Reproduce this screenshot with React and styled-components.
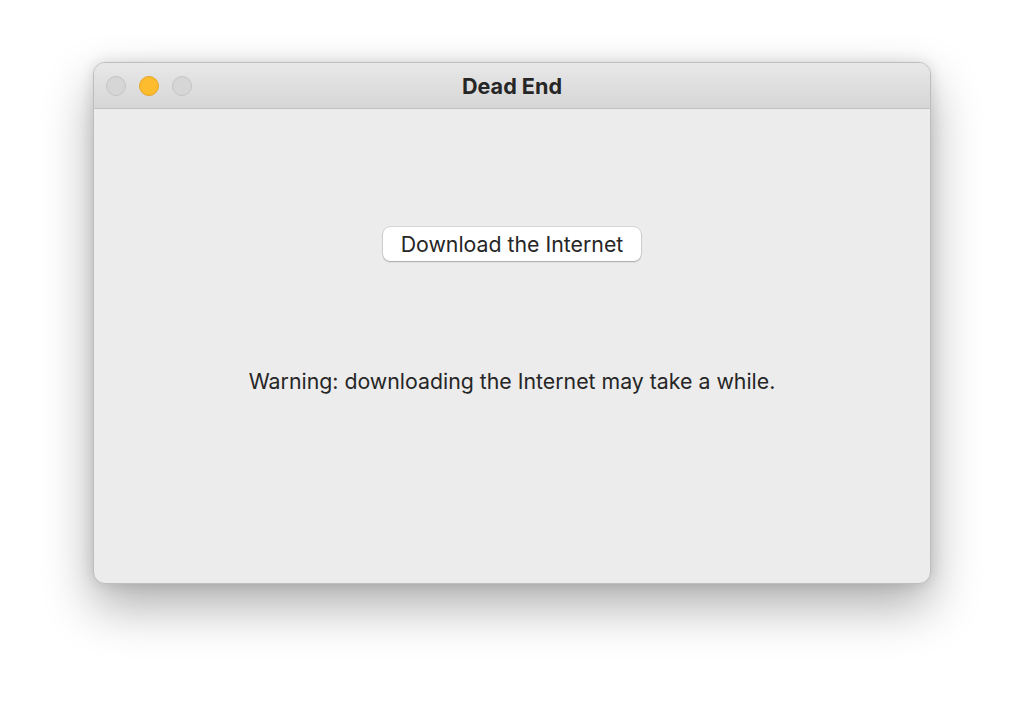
import React from "react";
import styled, { createGlobalStyle } from "styled-components";

const Global = createGlobalStyle`
  html, body { margin: 0; padding: 0; background: #ffffff; }
  body { font-family: Inter, "Noto Sans", sans-serif; -webkit-font-smoothing: antialiased; }
`;

const Page = styled.div`
  width: 1024px;
  height: 707px;
  box-sizing: border-box;
  padding: 62px 0 0 93px;
  background: #ffffff;
  overflow: hidden;
`;

const Window = styled.div`
  width: 838px;
  height: 522px;
  box-sizing: border-box;
  border-radius: 12px;
  background: #ececec;
  border: 1px solid #bdbdbd;
  box-shadow: 0 22px 50px rgba(0, 0, 0, 0.32), 0 0 14px rgba(0, 0, 0, 0.12);
  overflow: hidden;
  display: flex;
  flex-direction: column;
`;

const TitleBar = styled.div`
  height: 46px;
  flex: none;
  box-sizing: border-box;
  background: linear-gradient(#e8e8e8, #d6d6d6);
  border-bottom: 1px solid #c2c2c2;
  display: grid;
  grid-template-columns: 1fr auto 1fr;
  align-items: center;
  padding: 0 12px;
`;

const Lights = styled.div`
  display: flex;
  gap: 13px;
`;

const Light = styled.span`
  width: 20px;
  height: 20px;
  box-sizing: border-box;
  border-radius: 50%;
  background: ${(p) => p.$color};
  border: 1px solid ${(p) => p.$edge};
`;

const Title = styled.div`
  font-size: 21.6px;
  font-weight: 700;
  color: #262626;
`;

const Content = styled.div`
  flex: 1;
  display: flex;
  flex-direction: column;
  align-items: center;
  padding-top: 118px;
`;

const Button = styled.button`
  width: 258px;
  height: 34px;
  box-sizing: border-box;
  background: #ffffff;
  border: none;
  border-radius: 7px;
  box-shadow: 0 0 0 0.5px rgba(0, 0, 0, 0.18), 0 1px 1.5px rgba(0, 0, 0, 0.22);
  font-family: Inter, "Noto Sans", sans-serif;
  font-size: 21.3px;
  color: #262626;
  padding: 0;
`;

const Warning = styled.p`
  margin: 107px 0 0;
  font-size: 21.3px;
  color: #262626;
`;

export default function App() {
  return (
    <Page>
      <Global />
      <Window>
        <TitleBar>
          <Lights>
            <Light $color="#d6d6d6" $edge="#c4c4c4" />
            <Light $color="#fdbc2e" $edge="#e4a527" />
            <Light $color="#d6d6d6" $edge="#c4c4c4" />
          </Lights>
          <Title>Dead End</Title>
          <span />
        </TitleBar>
        <Content>
          <Button>Download the Internet</Button>
          <Warning>Warning: downloading the Internet may take a while.</Warning>
        </Content>
      </Window>
    </Page>
  );
}
